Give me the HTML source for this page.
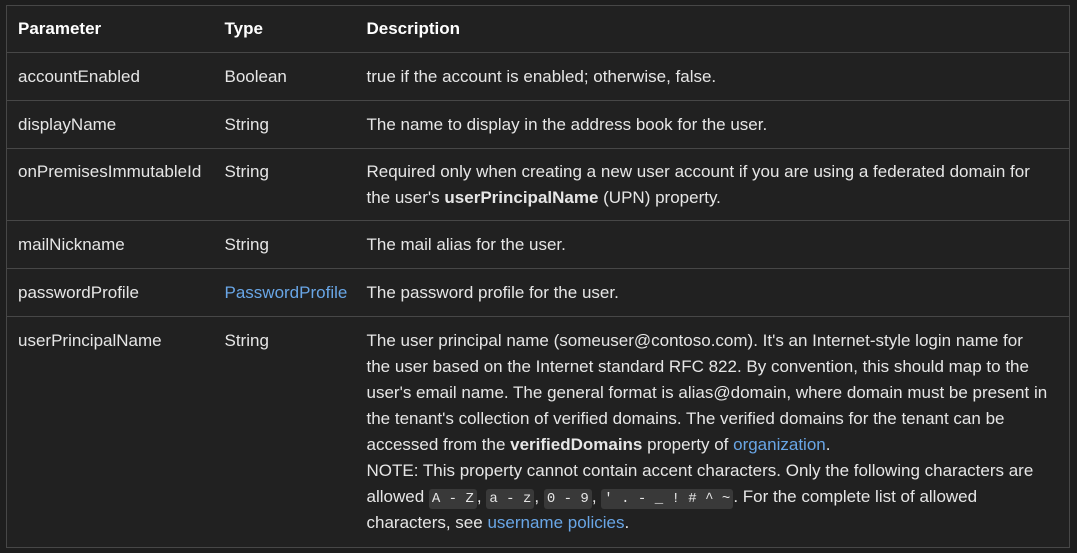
<!DOCTYPE html>
<html><head><style>
html,body{margin:0;background:#1e1e1e;}
body{width:1077px;height:553px;overflow:hidden;font-family:"Liberation Sans",sans-serif;font-size:17px;color:#e6e6e6;}
table{position:absolute;left:6px;top:5px;width:1064px;border-collapse:collapse;border:1px solid #474747;background:#212121;table-layout:fixed;}
td,th{border-top:1px solid #474747;padding:11px 6px 10px 11px;line-height:26px;vertical-align:top;text-align:left;white-space:nowrap;}
th{font-weight:bold;color:#fff;padding:10px 6px 10px 11px;}
tr.d td{padding-top:10px;padding-bottom:9px;}
tr.l td{padding-top:11px;padding-bottom:11px;}
a{color:#69a6e6;text-decoration:none;}
code{font-family:"Liberation Mono",monospace;font-size:14px;line-height:14px;background:#393939;border-radius:3px;padding:2px 3px;}
</style></head><body>
<table>
<colgroup><col style="width:207px"><col style="width:142px"><col></colgroup>
<tr><th>Parameter</th><th>Type</th><th>Description</th></tr>
<tr><td>accountEnabled</td><td>Boolean</td><td>true if the account is enabled; otherwise, false.</td></tr>
<tr><td>displayName</td><td>String</td><td>The name to display in the address book for the user.</td></tr>
<tr class="d"><td>onPremisesImmutableId</td><td>String</td><td>Required only when creating a new user account if you are using a federated domain for<br>the user's <b>userPrincipalName</b> (UPN) property.</td></tr>
<tr><td>mailNickname</td><td>String</td><td>The mail alias for the user.</td></tr>
<tr><td>passwordProfile</td><td><a>PasswordProfile</a></td><td>The password profile for the user.</td></tr>
<tr class="l"><td>userPrincipalName</td><td>String</td><td>The user principal name (someuser@contoso.com). It's an Internet-style login name for<br>the user based on the Internet standard RFC 822. By convention, this should map to the<br>user's email name. The general format is alias@domain, where domain must be present in<br>the tenant's collection of verified domains. The verified domains for the tenant can be<br>accessed from the <b>verifiedDomains</b> property of <a>organization</a>.<br>NOTE: This property cannot contain accent characters. Only the following characters are<br>allowed <code>A - Z</code>, <code>a - z</code>, <code>0 - 9</code>, <code>' . - _ ! # ^ ~</code>. For the complete list of allowed<br>characters, see <a>username policies</a>.</td></tr>
</table>
</body></html>
